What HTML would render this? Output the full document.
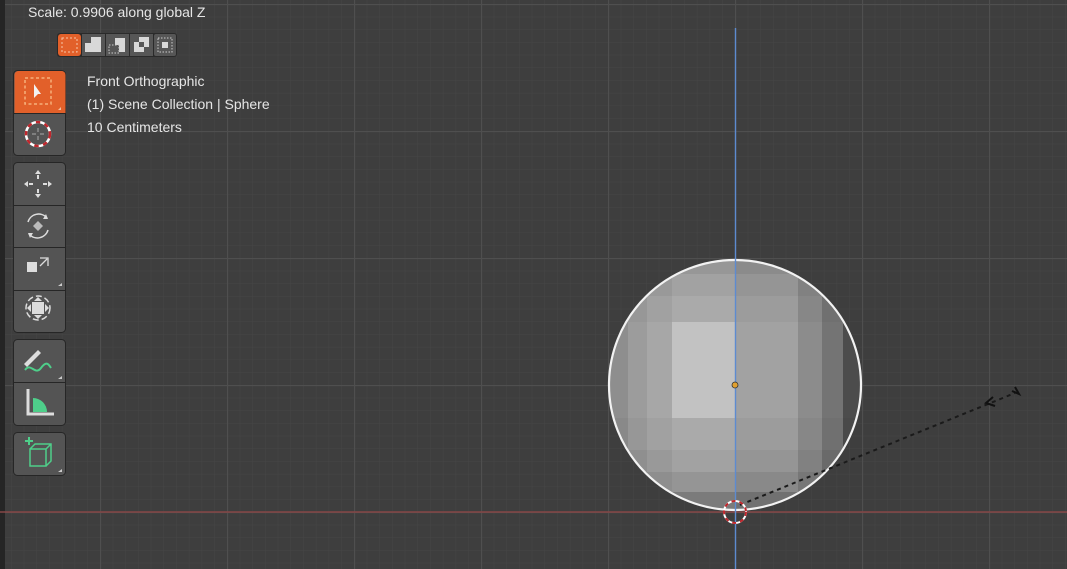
<!DOCTYPE html>
<html><head><meta charset="utf-8"><style>
html,body{margin:0;padding:0;width:1067px;height:569px;overflow:hidden;background:#3e3e3e;font-family:"Liberation Sans","DejaVu Sans",sans-serif}
.t{position:absolute;color:#e6e6e6;font-size:14px;white-space:nowrap}
</style></head><body>
<svg width="1067" height="569" style="position:absolute;left:0;top:0">
<defs>
<pattern id="minor" x="100" y="4" width="12.7" height="12.7" patternUnits="userSpaceOnUse">
<path d="M0 0H12.7M0 0V12.7" stroke="#464646" stroke-width="1" fill="none"/>
</pattern>
<pattern id="major" x="100" y="4" width="127" height="127" patternUnits="userSpaceOnUse">
<path d="M0 0.5H127M0.5 0V127" stroke="#4f4f4f" stroke-width="1.2" fill="none"/>
</pattern>
<clipPath id="sph"><ellipse cx="735" cy="385" rx="126" ry="125"/></clipPath>
</defs>
<rect width="1067" height="569" fill="#3e3e3e"/>
<rect width="1067" height="569" fill="url(#minor)"/>
<rect width="1067" height="569" fill="url(#major)"/>
<rect x="0" y="0" width="5" height="569" fill="#252525"/>
<line x1="0" y1="512" x2="1067" y2="512" stroke="#854646" stroke-width="1.6"/>
<!-- sphere -->
<g clip-path="url(#sph)">
<rect x="600" y="250" width="30" height="270" fill="#8e8e8e"/>
<rect x="628" y="250" width="20" height="270" fill="#9c9c9c"/>
<rect x="647" y="250" width="26" height="270" fill="#a7a7a7"/>
<rect x="672" y="250" width="63" height="270" fill="#b0b0b0"/>
<rect x="735" y="250" width="63" height="270" fill="#a2a2a2"/>
<rect x="798" y="250" width="24" height="270" fill="#8c8c8c"/>
<rect x="822" y="250" width="21" height="270" fill="#747474"/>
<rect x="843" y="250" width="25" height="270" fill="#4c4c4c"/>
<rect x="672" y="322" width="63" height="96" fill="#c2c2c2"/>
<rect x="600" y="250" width="270" height="24" fill="#000" opacity=".14"/>
<rect x="600" y="274" width="270" height="22" fill="#000" opacity=".08"/>
<rect x="600" y="296" width="270" height="26" fill="#000" opacity=".03"/>
<rect x="600" y="418" width="270" height="32" fill="#000" opacity=".03"/>
<rect x="600" y="450" width="270" height="22" fill="#000" opacity=".08"/>
<rect x="600" y="472" width="270" height="20" fill="#000" opacity=".15"/>
<rect x="600" y="492" width="270" height="30" fill="#000" opacity=".3"/>
</g>
<ellipse cx="735" cy="385" rx="126" ry="125" fill="none" stroke="#f2f2f2" stroke-width="2.2"/>
<line x1="735.5" y1="28" x2="735.5" y2="569" stroke="#5d8bd0" stroke-width="1.4"/>
<circle cx="735" cy="385" r="3" fill="#e0a030" stroke="#333" stroke-width=".8"/>
<!-- dashed line -->
<line x1="740" y1="505" x2="1015" y2="393" stroke="#1a1a1a" stroke-width="2" stroke-dasharray="4 4"/>
<path d="M993 397l-7 6 9 3M1012 391l7 3-4-7" stroke="#111" stroke-width="2" fill="none"/>
<!-- 3d cursor -->
<circle cx="735" cy="512" r="11" fill="none" stroke="#fff" stroke-width="2"/>
<circle cx="735" cy="512" r="11" fill="none" stroke="#c0272d" stroke-width="2" stroke-dasharray="4 4"/>
<!-- select mode icons -->
<rect x="57" y="33" width="120" height="24" rx="3" fill="#2a2a2a"/>
<rect x="58" y="34" width="23" height="22" rx="3" fill="#e2602a"/>
<rect x="62" y="38" width="15" height="14" fill="none" stroke="#f7c6a8" stroke-dasharray="2 2"/>
<rect x="82" y="34" width="23" height="22" fill="#565656"/>
<path d="M85 43h6v-6h10v15h-16z" fill="#d8d8d8"/>
<rect x="106" y="34" width="23" height="22" fill="#565656"/>
<path d="M115 38h10v14h-6v-7h-4z" fill="#d8d8d8"/><rect x="109" y="45" width="10" height="8" fill="none" stroke="#ccc" stroke-dasharray="1.5 1.5"/>
<rect x="130" y="34" width="23" height="22" fill="#565656"/>
<path d="M134 42h5v-5h10v10h-5v5h-10z" fill="#d8d8d8"/><rect x="139" y="42" width="5" height="5" fill="#565656"/>
<rect x="154" y="34" width="22" height="22" rx="2" fill="#565656"/>
<rect x="158" y="38" width="14" height="14" fill="none" stroke="#ccc" stroke-dasharray="1.5 1.5"/><rect x="162" y="42" width="6" height="6" fill="#d8d8d8"/>
<!-- toolbar -->
<g stroke="#262626" stroke-width="1">
<rect x="13.5" y="70.5" width="52" height="85" rx="4" fill="#545454"/>
<path d="M14 113.5h51" />
<rect x="13.5" y="162.5" width="52" height="170" rx="4" fill="#545454"/>
<path d="M14 205.5h51M14 247.5h51M14 290.5h51"/>
<rect x="13.5" y="339.5" width="52" height="86" rx="4" fill="#545454"/>
<path d="M14 382.5h51"/>
<rect x="13.5" y="432.5" width="52" height="43" rx="4" fill="#545454"/>
</g>
<path d="M14.5 75a4 4 0 0 1 4-4h43a4 4 0 0 1 4 4v38h-51z" fill="#e2602a"/>
<rect x="25" y="78" width="26" height="26" fill="none" stroke="#f6b07a" stroke-width="1.5" stroke-dasharray="3 2.5"/>
<path d="M34 84v14l4-4 3 0z" fill="#f2f2f2"/>
<path d="M61 107l0 3-3 0z" fill="#f0c0a0"/>
<circle cx="38" cy="134" r="12" fill="none" stroke="#fff" stroke-width="2.5"/>
<circle cx="38" cy="134" r="12" fill="none" stroke="#c0272d" stroke-width="2.5" stroke-dasharray="4.5 4.5"/>
<path d="M38 128v4M38 136v4M32 134h4M40 134h4" stroke="#aaa" stroke-width="1"/>
<g fill="#ddd">
<path d="M38 170l-3 4h6zM38 198l-3-4h6zM24 184l4-3v6zM52 184l-4-3v6z"/>
<rect x="37" y="175" width="2" height="4"/><rect x="37" y="189" width="2" height="4"/><rect x="29" y="183" width="4" height="2"/><rect x="43" y="183" width="4" height="2"/>
<path d="M38 221l5 5-5 5-5-5z" fill="#bbb"/>
<rect x="27" y="262" width="10" height="10"/>
<rect x="32" y="302" width="12" height="12"/>
<path d="M38 297l-4 4h8zM38 319l-4-4h8zM27 308l4-4v8zM49 308l-4-4v8z"/>
</g>
<path d="M28 222a11 11 0 0 1 19-4M48 230a11 11 0 0 1-19 4" stroke="#ddd" stroke-width="1.5" fill="none"/>
<path d="M46 214l2 5-5 0zM30 238l-2-5 5 0z" fill="#ddd"/>
<path d="M40 258h8v8M40 266l7-7" stroke="#ddd" stroke-width="1.3" fill="none"/>
<circle cx="38" cy="308" r="12" fill="none" stroke="#ddd" stroke-width="1.5" stroke-dasharray="6 3"/>
<path d="M24 364l14-14 3 3-14 14z" fill="#ddd"/>
<path d="M25 370c6-8 10 6 16-2s8-3 10 0" stroke="#4ecf8a" stroke-width="2" fill="none"/>
<path d="M28 389v25h26" stroke="#ddd" stroke-width="3" fill="none"/>
<path d="M33 412v-14a14 14 0 0 1 14 14z" fill="#4ecf8a"/>
<path d="M29 445v-8M25 441h8" stroke="#4ecf8a" stroke-width="2"/>
<path d="M30 449h16v17h-16zM30 449l5-5h16v17l-5 5M46 449l5-5" stroke="#4ecf8a" stroke-width="1.5" fill="none"/>
<g fill="#ccc"><path d="M62 283l-4 3h4zM62 376l-4 3h4zM62 469l-4 3h4z"/></g>
</svg>
<div class="t" style="left:28px;top:4px;font-size:14px">Scale: 0.9906 along global Z</div>
<div class="t" style="left:87px;top:73px">Front Orthographic</div>
<div class="t" style="left:87px;top:96px">(1) Scene Collection | Sphere</div>
<div class="t" style="left:87px;top:119px">10 Centimeters</div>
</body></html>
